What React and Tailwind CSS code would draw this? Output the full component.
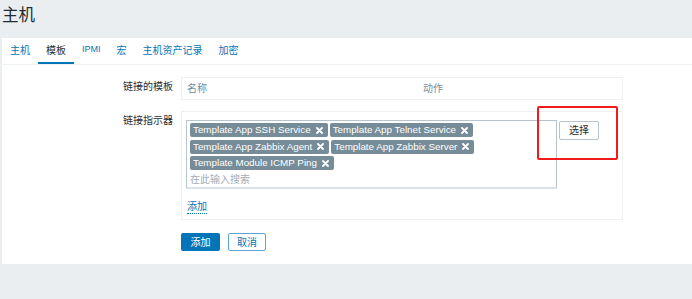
import React from "react";

const XIcon = () => (
  <svg width="7" height="7" viewBox="0 0 7 7" className="shrink-0">
    <path d="M1 1 L6 6 M6 1 L1 6" stroke="#ffffff" strokeWidth="1.8" strokeLinecap="round" />
  </svg>
);

const Tag = ({ label }) => (
  <div className="h-[14px] bg-[#768d99] text-white rounded-[2px] flex items-center pl-[3px] pr-[5px] gap-[5px] text-[9.8px] leading-[14px] whitespace-nowrap">
    <span>{label}</span>
    <XIcon />
  </div>
);

const tabs = ["主机", "模板", "IPMI", "宏", "主机资产记录", "加密"];

export default function App() {
  const tags = [
    "Template App SSH Service",
    "Template App Telnet Service",
    "Template App Zabbix Agent",
    "Template App Zabbix Server",
    "Template Module ICMP Ping",
  ];
  return (
    <div className="relative w-[692px] h-[299px] overflow-hidden bg-[#ebeef1] font-['Liberation_Sans','Noto_Sans_CJK_SC',sans-serif] text-[#1f2c33]">
      <div className="h-[38px] flex items-center pl-[2px] pb-[8px]">
        <h1 className="text-[16.5px] leading-[20px] text-[#1f2c33]">主机</h1>
      </div>
      <div className="ml-[2px] bg-white h-[226px]">
        <div className="flex h-[27px] border-b border-[#eef1f3]">
          {tabs.map((t, i) => (
            <div
              key={t}
              className={
                i === 1
                  ? "h-[26px] px-[8px] flex items-center border-b-2 border-[#0275b8] text-[10px] text-[#1f2c33]"
                  : t === "IPMI"
                  ? "h-[26px] px-[8px] flex items-center border-b-2 border-transparent text-[9px] text-[#0275b8]"
                  : "h-[26px] px-[8px] flex items-center border-b-2 border-transparent text-[10px] text-[#0275b8]"
              }
            >
              {t}
            </div>
          ))}
        </div>
        <div className="pt-[12px]">
          <div className="flex">
            <div className="w-[171px] text-right text-[10px] leading-[14px] pt-[3px]">链接的模板</div>
            <div className="ml-[8px] w-[442px] h-[23px] border border-[#eef0f1] flex items-center pl-[5px] text-[10px] text-[#768d99]">
              <div className="w-[236px]">名称</div>
              <div>动作</div>
            </div>
          </div>
          <div className="flex mt-[11px]">
            <div className="w-[171px] text-right text-[10px] leading-[14px] pt-[3px]">链接指示器</div>
            <div className="ml-[8px] w-[442px] h-[109px] border border-[#eef0f1] pl-[4px] pt-[8px]">
              <div className="flex items-start">
                <div className="w-[371px] h-[69px] border border-[#b7c4cb] border-b-2 border-b-[#dce3e7] pl-[3px] pt-[2px]">
                  <div className="flex flex-wrap gap-x-[2px] gap-y-[2.5px]">
                    {tags.map((t) => (
                      <Tag key={t} label={t} />
                    ))}
                  </div>
                  <div className="text-[10px] leading-[14px] text-[#a3adb3] mt-[3px]">在此输入搜索</div>
                </div>
                <button className="ml-[2px] mt-[1px] w-[40px] h-[19px] border border-[#b7c4cb] rounded-[2px] bg-white text-[10px] text-[#1f2c33] flex items-center justify-center">
                  选择
                </button>
              </div>
              <div className="mt-[4px] pl-[1px]">
                <span className="text-[10px] leading-[12px] text-[#0275b8] border-b border-dotted border-[#0275b8] inline-block">添加</span>
              </div>
            </div>
          </div>
          <div className="flex mt-[13px] ml-[179px] gap-[8px]">
            <button className="w-[39px] h-[18px] bg-[#0275b8] rounded-[2px] text-white text-[10px] flex items-center justify-center">添加</button>
            <button className="w-[38px] h-[18px] bg-white border border-[#5fa3d3] rounded-[2px] text-[#0275b8] text-[10px] flex items-center justify-center">取消</button>
          </div>
        </div>
      </div>
      <div className="absolute left-[537px] top-[106px] w-[81px] h-[54px] border-2 border-[#f21b1b] rounded-[2px]"></div>
    </div>
  );
}
